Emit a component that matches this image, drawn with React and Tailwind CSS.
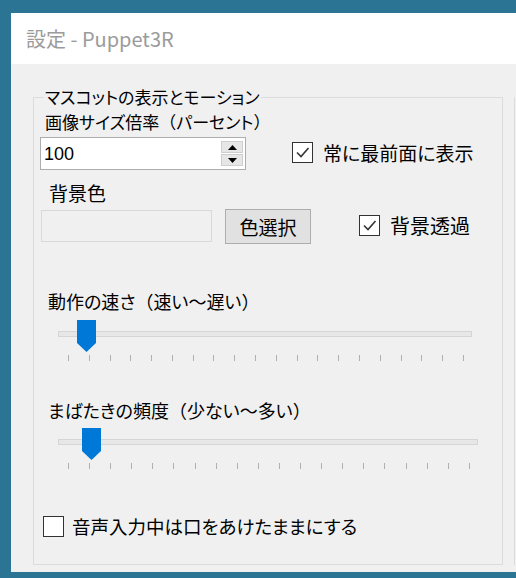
import React from "react";

const FONT = "font-['Noto_Sans_CJK_JP','Noto_Sans',sans-serif]";

// full-width parens keep their width (no palt)
function P({ children }) {
  return <span className="[font-feature-settings:normal]">{children}</span>;
}

function CheckBox({ checked }) {
  return (
    <div className="w-[21px] h-[21px] border border-[#333333] bg-white flex items-center justify-center shrink-0">
      {checked && (
        <svg width="15" height="15" viewBox="0 0 15 15">
          <path d="M2 7.5 L6 11.5 L13.5 3" fill="none" stroke="#333" strokeWidth="1.6" />
        </svg>
      )}
    </div>
  );
}

function Ticks({ width }) {
  const ticks = Array.from({ length: 20 });
  return (
    <div className="flex justify-between ml-[10px]" style={{ width }}>
      {ticks.map((_, i) => (
        <div key={i} className="w-px h-[6px] bg-[#b0b0b0]" />
      ))}
    </div>
  );
}

function Slider({ trackWidth, thumbLeft, tickWidth }) {
  return (
    <div className="relative flex flex-col ml-[24px] h-[42px]" style={{ width: trackWidth }}>
      <div className="mt-[11px] h-[6px] w-full bg-[#e7e7e7] border border-[#d6d6d6]" />
      <div className="mt-[18px]">
        <Ticks width={tickWidth} />
      </div>
      {/* thumb */}
      <svg className="absolute top-0" style={{ left: thumbLeft }} width="19" height="32" viewBox="0 0 19 32">
        <path d="M0 0 H19 V23 L9.5 32 L0 23 Z" fill="#0078d7" />
      </svg>
    </div>
  );
}

export default function App() {
  return (
    <div className={`w-[516px] h-[578px] bg-[#2b7493] pt-[13px] pl-[11px] overflow-hidden ${FONT}`}>
      <div className="w-[505px] h-[559px] bg-[#f0f0f0] flex flex-col">
        {/* Title bar */}
        <div className="h-[51px] bg-white flex items-center pl-[15px] shrink-0">
          <span className="text-[20px] text-[#9b9b9b] leading-none">設定 - Puppet3R</span>
        </div>

        {/* Body */}
        <div className="relative flex-1 pl-[22px] pt-[33px]">
          <div className="absolute left-[503px] top-[33px] w-px h-[468px] bg-[#dcdcdc]" />

          <div className="relative flex flex-col w-[470px] h-[468px] border border-[#dcdcdc] text-black [font-feature-settings:'palt']">
            <div className="absolute left-[10px] top-[-11px] px-px bg-[#f0f0f0] text-[17px] leading-[20px]">
              マスコットの表示とモーション
            </div>

            <div className="mt-[14px] ml-[11px] h-[20px] text-[17px] leading-[20px]">
              画像サイズ倍率<P>（</P>パーセント<P>）</P>
            </div>

            {/* spin box + topmost */}
            <div className="mt-[5px] flex items-start">
              <div className="ml-[6px] w-[206px] h-[33px] bg-white border border-[#adadad] flex items-center">
                <span className="ml-[3px] text-[18px] leading-none font-['Liberation_Sans',sans-serif]">100</span>
                <div className="ml-auto mr-[2px] flex flex-col gap-px">
                  <div className="w-[22px] h-[12px] bg-[#e6e6e6] border border-[#cfcfcf] flex items-center justify-center">
                    <svg width="9" height="5" viewBox="0 0 9 5"><path d="M0 5 L4.5 0 L9 5 Z" fill="#000" /></svg>
                  </div>
                  <div className="w-[22px] h-[12px] bg-[#e6e6e6] border border-[#cfcfcf] flex items-center justify-center">
                    <svg width="9" height="5" viewBox="0 0 9 5"><path d="M0 0 L4.5 5 L9 0 Z" fill="#000" /></svg>
                  </div>
                </div>
              </div>
              <div className="ml-[46px] mt-[5px] flex items-center gap-[10px]">
                <CheckBox checked />
                <span className="text-[19px] leading-none">常に最前面に表示</span>
              </div>
            </div>

            <div className="mt-[12px] ml-[15px] h-[21px] text-[19px] leading-[21px]">背景色</div>

            {/* color row */}
            <div className="mt-[6px] flex items-start">
              <div className="ml-[7px] mt-px w-[171px] h-[32px] border border-[#d9d9d9] bg-[#f0f0f0]" />
              <div className="ml-[13px] w-[86px] h-[35px] bg-[#e1e1e1] border border-[#adadad] flex items-center justify-center text-[19px] leading-none">
                色選択
              </div>
              <div className="ml-[48px] mt-[6px] flex items-center gap-[10px]">
                <CheckBox checked />
                <span className="text-[20px] leading-none">背景透過</span>
              </div>
            </div>

            <div className="mt-[47px] ml-[14px] h-[21px] text-[18px] leading-[21px]">
              動作の速さ<P>（</P>速い<P>〜</P>遅い<P>）</P>
            </div>
            <div className="mt-[8px]">
              <Slider trackWidth={414} thumbLeft={19} tickWidth={396} />
            </div>

            <div className="mt-[38px] ml-[14px] h-[21px] text-[18px] leading-[21px]">
              まばたきの頻度<P>（</P>少ない<P>〜</P>多い<P>）</P>
            </div>
            <div className="mt-[7px]">
              <Slider trackWidth={420} thumbLeft={24} tickWidth={402} />
            </div>

            <div className="mt-[46px] ml-[9px] flex items-center gap-[8px]">
              <CheckBox />
              <span className="text-[18.5px] leading-none">音声入力中は口をあけたままにする</span>
            </div>
          </div>
        </div>
      </div>
    </div>
  );
}
